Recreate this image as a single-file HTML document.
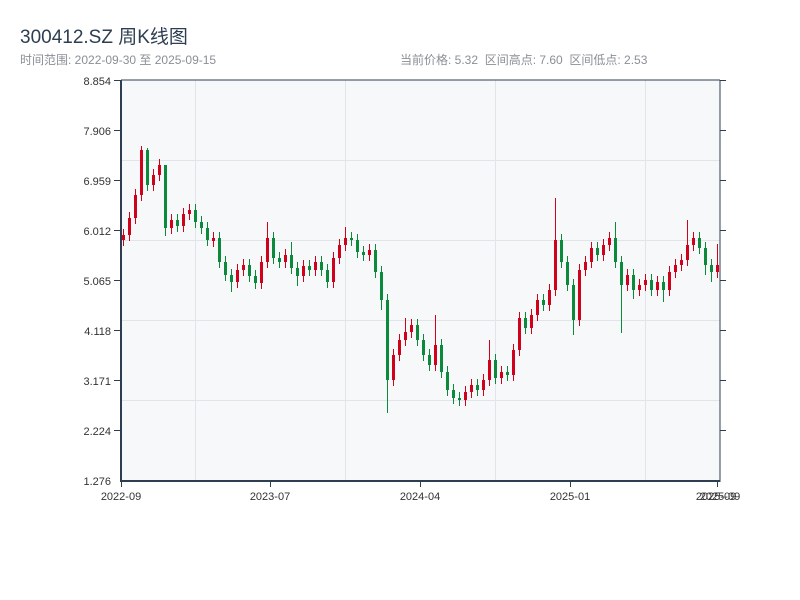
<!DOCTYPE html>
<html><head><meta charset="utf-8">
<style>
body{margin:0;width:800px;height:600px;background:#fff;font-family:"Liberation Sans","Noto Sans CJK SC",sans-serif;overflow:hidden;position:relative}
.t{position:absolute;left:20px;top:22px;font-size:19px;color:#2c3e50;z-index:2}
.s{position:absolute;left:20px;top:51px;font-size:12px;color:#8a8f96;z-index:2}
.r{position:absolute;left:400px;top:51px;font-size:12px;color:#8a8f96;white-space:pre;z-index:2}
svg{position:absolute;left:0;top:0}
text{font-family:"Liberation Sans",sans-serif;font-size:11px;fill:#333}
</style></head><body>
<div class="t">300412.SZ 周K线图</div>
<div class="s">时间范围: 2022-09-30 至 2025-09-15</div>
<div class="r">当前价格: 5.32  区间高点: 7.60  区间低点: 2.53</div>
<svg width="800" height="600" xmlns="http://www.w3.org/2000/svg">
<rect x="121" y="80" width="599" height="401" fill="#f7f8fa"/>
<g stroke="#e1e4e8" stroke-width="1">
<line x1="195.5" y1="80" x2="195.5" y2="481"/><line x1="345.5" y1="80" x2="345.5" y2="481"/>
<line x1="495.5" y1="80" x2="495.5" y2="481"/><line x1="645.5" y1="80" x2="645.5" y2="481"/>
<line x1="121" y1="160.5" x2="720" y2="160.5"/><line x1="121" y1="240.5" x2="720" y2="240.5"/>
<line x1="121" y1="320.5" x2="720" y2="320.5"/><line x1="121" y1="400.5" x2="720" y2="400.5"/>
</g>
<g fill="none">
<path stroke="#d0021b" stroke-width="1" d="M123.5 229V246M129.5 212V241M135.5 189V224M141.5 146V201M153.5 169V191M159.5 159V181M171.5 214V234M183.5 208V232M189.5 204V220M213.5 232V247M237.5 264V288M243.5 259V276M261.5 256V289M267.5 222V268M285.5 249V268M303.5 260V282M315.5 256V276M333.5 252V288M339.5 239V264M345.5 227V251M369.5 244V261M393.5 349V386M399.5 334V361M405.5 318V346M411.5 319V338M435.5 315V371M465.5 386V406M471.5 379V398M483.5 374V396M489.5 340V386M501.5 366V384M513.5 344V381M519.5 312V356M531.5 309V334M537.5 294V321M549.5 284V311M555.5 198V296M579.5 264V326M585.5 256V276M591.5 242V268M603.5 239V261M609.5 232V251M627.5 269V291M639.5 279V296M645.5 274V291M657.5 276V296M669.5 266V296M675.5 259V278M681.5 254V271M687.5 220V266M693.5 232V251M717.5 244V278"/>
<path stroke="#d0021b" stroke-width="3" d="M123.5 235V240M129.5 218V235M135.5 195V218M141.5 150V195M153.5 175V185M159.5 165V175M171.5 220V228M183.5 214V226M189.5 210V214M213.5 238V241M237.5 270V282M243.5 265V270M261.5 262V283M267.5 238V262M285.5 255V262M303.5 266V276M315.5 262V270M333.5 258V282M339.5 245V258M345.5 238V245M369.5 250V255M393.5 355V380M399.5 340V355M405.5 332V340M411.5 325V332M435.5 345V365M465.5 392V400M471.5 385V392M483.5 380V390M489.5 360V380M501.5 372V378M513.5 350V375M519.5 318V350M531.5 315V328M537.5 300V315M549.5 290V305M555.5 240V290M579.5 270V320M585.5 262V270M591.5 248V262M603.5 245V255M609.5 238V245M627.5 275V285M639.5 285V290M645.5 280V285M657.5 282V290M669.5 272V290M675.5 265V272M681.5 260V265M687.5 245V260M693.5 238V245M717.5 265V272"/>
<path stroke="#0a8a3a" stroke-width="1" d="M147.5 148V191M165.5 172V236M177.5 214V232M195.5 204V228M201.5 216V234M207.5 222V246M219.5 232V268M225.5 256V281M231.5 269V292M249.5 259V282M255.5 270V289M273.5 232V264M279.5 252V268M291.5 242V274M297.5 262V286M309.5 260V276M321.5 256V276M327.5 264V288M351.5 232V246M357.5 234V258M363.5 246V261M375.5 244V278M381.5 266V310M387.5 294V413M417.5 319V346M423.5 334V361M429.5 349V371M441.5 339V378M447.5 366V396M453.5 384V404M459.5 392V406M477.5 379V396M495.5 354V384M507.5 366V381M525.5 312V334M543.5 294V311M561.5 234V268M567.5 256V291M573.5 279V335M597.5 242V261M615.5 222V268M621.5 256V333M633.5 269V299M651.5 274V296M663.5 276V302M699.5 232V254M705.5 242V275M711.5 259V282"/>
<path stroke="#0a8a3a" stroke-width="3" d="M147.5 150V185M165.5 165V228M177.5 220V226M195.5 210V222M201.5 222V228M207.5 228V240M219.5 238V262M225.5 262V275M231.5 275V282M249.5 265V276M255.5 276V283M273.5 238V258M279.5 258V262M291.5 255V268M297.5 268V276M309.5 266V270M321.5 262V270M327.5 270V282M351.5 238V240M357.5 240V252M363.5 252V255M375.5 250V272M381.5 272V300M387.5 300V380M417.5 325V340M423.5 340V355M429.5 355V365M441.5 345V372M447.5 372V390M453.5 390V398M459.5 398V400M477.5 385V390M495.5 360V378M507.5 372V375M525.5 318V328M543.5 300V305M561.5 240V262M567.5 262V285M573.5 285V320M597.5 248V255M615.5 238V262M621.5 262V285M633.5 275V290M651.5 280V290M663.5 282V290M699.5 238V248M705.5 248V265M711.5 265V272"/>
</g>
<g stroke="#2c3e50" stroke-width="2" fill="none">
<line x1="121" y1="80" x2="121" y2="482"/><line x1="120" y1="481" x2="720" y2="481"/>
<line x1="121" y1="80" x2="720" y2="80" stroke-width="1"/>
<line x1="720" y1="80" x2="720" y2="482" stroke-width="1"/>
</g>
<g stroke="#2c3e50" stroke-width="1">
<line x1="114" y1="80.5" x2="121" y2="80.5"/><line x1="114" y1="130.5" x2="121" y2="130.5"/><line x1="114" y1="180.5" x2="121" y2="180.5"/><line x1="114" y1="230.5" x2="121" y2="230.5"/><line x1="114" y1="280.5" x2="121" y2="280.5"/><line x1="114" y1="330.5" x2="121" y2="330.5"/><line x1="114" y1="380.5" x2="121" y2="380.5"/><line x1="114" y1="430.5" x2="121" y2="430.5"/>
<line x1="720" y1="80.5" x2="726" y2="80.5"/><line x1="720" y1="130.5" x2="726" y2="130.5"/><line x1="720" y1="180.5" x2="726" y2="180.5"/><line x1="720" y1="230.5" x2="726" y2="230.5"/><line x1="720" y1="280.5" x2="726" y2="280.5"/><line x1="720" y1="330.5" x2="726" y2="330.5"/><line x1="720" y1="380.5" x2="726" y2="380.5"/><line x1="720" y1="430.5" x2="726" y2="430.5"/>
<line x1="121.5" y1="481" x2="121.5" y2="487"/><line x1="270.5" y1="481" x2="270.5" y2="487"/><line x1="420.5" y1="481" x2="420.5" y2="487"/><line x1="570.5" y1="481" x2="570.5" y2="487"/><line x1="717.5" y1="481" x2="717.5" y2="487"/>
</g>
<g text-anchor="end">
<text x="111" y="85">8.854</text><text x="111" y="135">7.906</text><text x="111" y="185">6.959</text><text x="111" y="235">6.012</text><text x="111" y="285">5.065</text><text x="111" y="335">4.118</text><text x="111" y="385">3.171</text><text x="111" y="435">2.224</text><text x="111" y="485">1.276</text>
</g>
<g text-anchor="middle">
<text x="121" y="500">2022-09</text><text x="270" y="500">2023-07</text><text x="420" y="500">2024-04</text><text x="570" y="500">2025-01</text><text x="716" y="500">2025-09</text><text x="720" y="500">2025-09</text>
</g>
</svg>
</body></html>
